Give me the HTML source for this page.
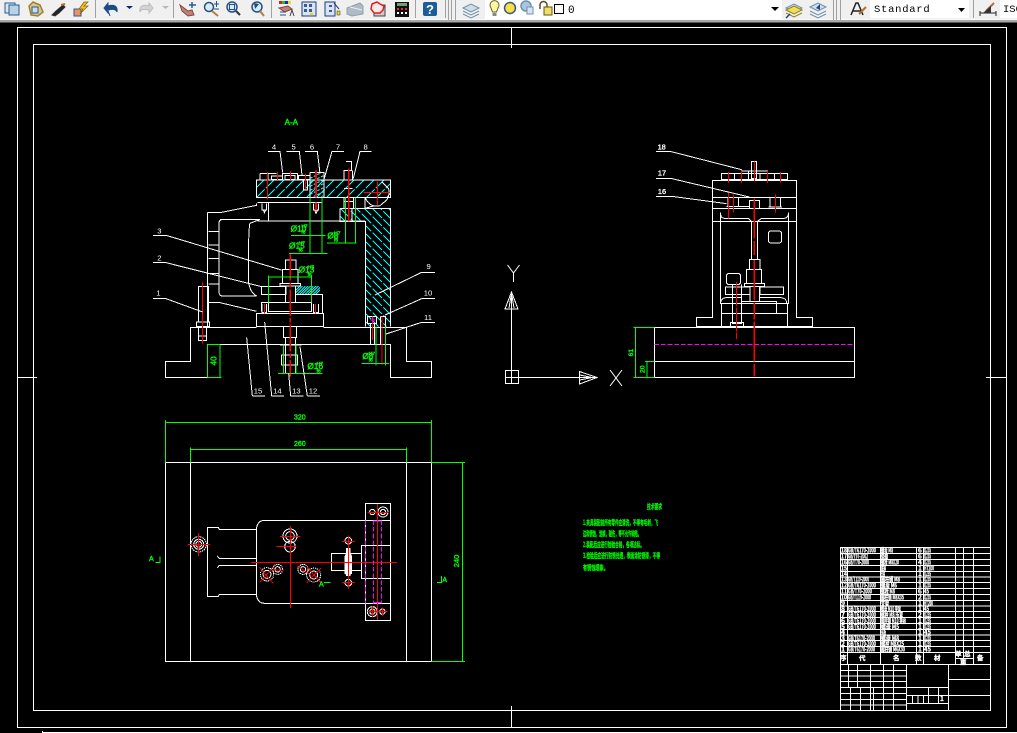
<!DOCTYPE html>
<html><head><meta charset="utf-8"><style>
html,body{margin:0;padding:0;background:#000;width:1017px;height:733px;overflow:hidden}
svg{display:block;position:absolute;left:0;top:0}
text{font-family:"Liberation Sans","Noto Sans CJK SC",sans-serif}
.n text{font-family:"Noto Sans CJK SC",sans-serif;font-weight:700;font-size:7px;fill:#00f000;stroke:#00f000;stroke-width:.35}
.t text{font-family:"Noto Sans CJK SC",sans-serif;font-weight:700;font-size:6.500px;fill:#fff;stroke:#fff;stroke-width:.3}
.g text{stroke:#0f0;stroke-width:1.200}
</style></head><body>
<svg width="1017" height="733" viewBox="0 0 1017 733" xmlns="http://www.w3.org/2000/svg">
<defs>
<clipPath id="c1"><rect x="350" y="210" width="402" height="52"/></clipPath>
<clipPath id="c2"><path d="M600 295H752V650H676V335H600Z"/></clipPath>
<clipPath id="c3"><rect x="465" y="528" width="75" height="25"/></clipPath>
<clipPath id="c4"><rect x="510" y="190" width="40" height="70"/></clipPath>
</defs>
<rect width="1017" height="733" fill="#000"/>
<!-- toolbar -->
<rect width="1017" height="20" fill="#f0f0f0"/>
<rect y="19" width="1017" height="1" fill="#fafafa"/>
<rect y="20" width="1017" height="2" fill="#a8a8a8"/>
<rect y="22" width="1017" height="1" fill="#555"/>
<rect x="485" width="297" height="19" fill="#fff"/>
<rect x="870" width="99" height="18" fill="#fff"/>
<rect x="1000" width="17" height="18" fill="#fff"/>
<g fill="#a0a0a0">
<rect x="95" width="1" height="18"/><rect x="173" width="1" height="18"/><rect x="271" width="1" height="18"/><rect x="415" width="1" height="18"/><rect x="445" width="1" height="18"/>
<rect x="448" width="1" height="20"/><rect x="451" width="1" height="20"/><rect x="455" width="1" height="20"/>
<rect x="833" width="1" height="20"/><rect x="836" width="1" height="20"/><rect x="840" width="1" height="20"/><rect x="973" width="1" height="18"/>
</g>
<!-- icons -->
<g stroke-width="1">
<rect x="5" y="3" width="10" height="10" fill="#d8e8f0" stroke="#2a5a90"/><rect x="9" y="5" width="10" height="10" fill="#b8d4e4" stroke="#2a5a90"/>
<path d="M29 6L33 2L40 5L43 12L38 16L31 15Z" fill="#d8c890" stroke="#a08030" stroke-width="1.500"/><rect x="32" y="7" width="6" height="6" fill="#c8dcea" stroke="#2a5a90"/>
<path d="M52 15L56 11L63 5L65 7L59 13L55 16Z" fill="#222" stroke="#333"/><path d="M61 5L65 4" stroke="#b07030" stroke-width="2"/>
<rect x="74" y="9" width="7" height="7" fill="#f09060" stroke="#2a5a90"/><path d="M84 2L79 9H83L80 14L88 6H84L88 2Z" fill="#f0c020" stroke="#806010" stroke-width=".7"/>
<path d="M104 8L108 3V6C114 4 118 6 117 12C116 9 113 9 108 10V13Z M107 8L110 16" fill="#1c4c88" stroke="#1c4c88"/>
<path d="M126 6h7l-3.500 3z" fill="#14246a"/>
<path d="M153 8L149 3V6C143 4 139 6 140 12C141 9 144 9 149 10V13Z" fill="#d4d4d4" stroke="#bbb"/>
<path d="M162 6h7l-3.500 3z" fill="#b8b8b8"/>
<path d="M180 5L188 11L192 10L194 15L188 16L182 11Z" fill="#c08078" stroke="#804840"/><path d="M192 2V8M189 5H196" stroke="#2a5a90" stroke-width="1.500"/>
<circle cx="209" cy="7" r="4.500" fill="#d8ecf8" stroke="#2a5080" stroke-width="1.500"/><path d="M212 11L218 16" stroke="#b08040" stroke-width="2"/><path d="M214 4h5M216.500 1v6M214 9h5" stroke="#2a5080"/>
<circle cx="232" cy="7" r="5" fill="#d8ecf8" stroke="#2a5080" stroke-width="1.500"/><rect x="229.500" y="4.500" width="5" height="5" fill="none" stroke="#2a5080"/><path d="M236 11L240 15" stroke="#333" stroke-width="2"/>
<circle cx="257" cy="7" r="5" fill="#d8ecf8" stroke="#2a5080" stroke-width="1.500"/><path d="M255 9L254 3L259 4Z" fill="#1c4c88"/><path d="M260 11L264 16" stroke="#b08040" stroke-width="2"/>
<rect x="279" y="1" width="3" height="3" fill="#e02020"/><rect x="282" y="1" width="3" height="3" fill="#20c020"/><rect x="285" y="1" width="3" height="3" fill="#2020e0"/><rect x="288" y="1" width="3" height="3" fill="#e0e020"/><path d="M279 8L288 6L292 9L285 12Z" fill="#c08078" stroke="#804840"/><path d="M280 12h6M280 15h6" stroke="#2a5080"/><path d="M290 16L292 10L294 16" stroke="#444" fill="none"/>
<rect x="302" y="2" width="14" height="14" fill="#d8e4f0" stroke="#1c3c80"/><path d="M304 4h3v3h-3zM309 4h3v3h-3zM304 9h3v3h-3zM309 9h3v3h-3z" fill="#3a5a90"/><rect x="310" y="13" width="3" height="2" fill="#f0d020"/>
<rect x="325" y="2" width="10" height="14" fill="#d8e4f0" stroke="#1c3c80"/><path d="M329 5h3v2h-3zM329 10h3v2h-3z" fill="#3a5a90"/><path d="M334 3L339 9" stroke="#1c3c80" fill="none"/><rect x="337" y="11" width="3" height="4" fill="#f0d020" stroke="#333" stroke-width=".5"/>
<path d="M347 8L360 3L363 6V14L352 16L347 14Z" fill="#b0bcc4" stroke="#90a0ac"/><path d="M350 7L362 10" stroke="#eee"/>
<rect x="374" y="5" width="11" height="11" fill="#ccc" stroke="#444"/><path d="M372 4L377 2L380 4L384 6L383 10L380 13L374 13L371 9Z" fill="#fde8e8" stroke="#d82020" stroke-width="1.500"/>
<rect x="395" y="2" width="14" height="15" fill="#111"/><rect x="397" y="3" width="10" height="3" fill="#70a070"/><path d="M397 8h2v2h-2zM401 8h2v2h-2zM405 8h2v2h-2z" fill="#e03030"/><path d="M397 12h2v2h-2zM401 12h2v2h-2zM405 12h2v2h-2z" fill="#fff"/>
<rect x="423" y="2" width="14" height="14" rx="2" fill="#1c5c98"/><text x="430" y="14" font-size="13" font-weight="700" fill="#fff" text-anchor="middle">?</text>
<path d="M463 8L471 4L479 8L471 12Z" fill="#d0dce8" stroke="#7090a8"/><path d="M463 11L471 15L479 11M463 14L471 18L479 14" fill="none" stroke="#7090a8"/>
<path d="M491 8a4.500 4.500 0 1 1 7 0L496.500 12H492.500Z" fill="#fff8a0" stroke="#606030"/><rect x="492.500" y="13" width="4" height="3" fill="#888"/>
<circle cx="510" cy="8" r="5.500" fill="#f8e040" stroke="#305880" stroke-width="1.500"/>
<circle cx="526" cy="6" r="5" fill="#a8c8e0" stroke="#7090b0" stroke-width="1.500"/><rect x="527" y="7" width="6" height="7" fill="#d8e4f0" stroke="#7090b0"/>
<path d="M540 9V5a3.500 3.500 0 0 1 7 0V7" fill="none" stroke="#604820" stroke-width="1.500"/><rect x="544" y="7" width="8" height="8" fill="#f0e060" stroke="#605020"/>
<rect x="554.500" y="4.500" width="9" height="9" fill="#fff" stroke="#000"/>
<path d="M771 7h8l-4 4z" fill="#000"/>
<path d="M786 8L794 4L802 8L794 12Z" fill="#d0dce8" stroke="#7090a8"/><path d="M786 10L794 14L802 10L794 6Z" fill="#f0e050" stroke="#908020"/><path d="M786 13L794 17L802 13" fill="none" stroke="#908020"/><path d="M786 18L790 14" stroke="#1c4c88" stroke-width="1.500"/>
<path d="M810 7L818 3L826 7L818 11Z" fill="#d0dce8" stroke="#7090a8"/><path d="M810 11L818 15L826 11M810 14L818 18L826 14" fill="none" stroke="#7090a8"/><path d="M816 8L820 4V10Z" fill="#1c4c88"/>
<path d="M851 15L856 3H858L863 15M853 11H861" fill="none" stroke="#222" stroke-width="1.500"/><path d="M859 14L866 7" stroke="#b07030" stroke-width="2"/>
<path d="M980 13H996M980 11V16M996 11V16" stroke="#222" fill="none"/><path d="M986 11L994 3" stroke="#b07040" stroke-width="2"/><path d="M983 13L991 6V13Z" fill="#333"/>
</g>
<text x="568" y="13" font-size="11" fill="#000" style="font-family:'Liberation Mono',monospace">0</text>
<text x="874" y="12" font-size="10.500" fill="#000" letter-spacing=".75" style="font-family:'Liberation Mono',monospace">Standard</text>
<path d="M958 8h7l-3.500 4z" fill="#000"/>
<text x="1003" y="12" font-size="10.500" fill="#000" style="font-family:'Liberation Mono',monospace">ISO</text>

<!-- frames -->
<g fill="none" stroke="#fff" stroke-width="1" shape-rendering="crispEdges">
<rect x="17.500" y="27.500" width="989" height="700"/>
<rect x="33.500" y="44.500" width="957" height="666"/>
<path d="M511.500 27V48M511.500 706V727M17 377.500H37M986 377.500H1006"/>
<path d="M42 732.500H1017M42.500 731V733"/>
<!-- UCS -->
<path d="M511.500 309V370M505.500 370.500h13v13h-13zM505.500 377.500H518.500M511.500 370.500V383.500M518.500 377.500H580"/>
<path d="M505 309L511.500 292L518 309ZM511.500 292V309M509 308L511 296M514 308L512 296" stroke-width="1"/>
<path d="M579.500 371.500V384L597 377.500ZM580 377.500H597M580 375L592 377.500M580 380L592 377.500"/>
<path d="M507.500 265L513.500 273L519.500 265M513.500 273V282" shape-rendering="auto"/>
<path d="M610 370L622 386M622 370L610 386" shape-rendering="auto"/>
</g>

<!-- SECTION VIEW -->
<g transform="translate(140,110) scale(.33333)" fill="none" stroke-width="3" shape-rendering="crispEdges">
<path clip-path="url(#c1)" stroke="#0ff" stroke-dasharray="34 5" d="M320 262l52-52m-22 52l52-52m-22 52l52-52m-22 52l52-52m-22 52l52-52m-22 52l52-52m-22 52l52-52m-22 52l52-52m-22 52l52-52m-22 52l52-52m-22 52l52-52m-22 52l52-52m-22 52l52-52m-22 52l52-52m-22 52l52-52"/>
<path clip-path="url(#c2)" stroke="#0ff" stroke-dasharray="40 6" d="M600 150l160 160m-160-136l160 160m-160-136l160 160m-160-136l160 160m-160-136l160 160m-160-136l160 160m-160-136l160 160m-160-136l160 160m-160-136l160 160m-160-136l160 160m-160-136l160 160m-160-136l160 160m-160-136l160 160m-160-136l160 160m-160-136l160 160m-160-136l160 160m-160-136l160 160m-160-136l160 160"/>
<path clip-path="url(#c3)" stroke="#0ff" d="M455 553l25-25m-17 25l25-25m-17 25l25-25m-17 25l25-25m-17 25l25-25m-17 25l25-25m-17 25l25-25m-17 25l25-25m-17 25l25-25m-17 25l25-25"/>
<path clip-path="url(#c4)" stroke="#0ff" stroke-dasharray="7 5" d="M500 210l60-30m-60 42l60-30m-60 42l60-30m-60 42l60-30m-60 42l60-30m-60 42l60-30m-60 42l60-30"/>
<g stroke="#fff">
<path d="M202 802H76V754H152V652H350M550 652H800V754H875V802H752V703H202V802"/>
<rect x="350" y="610" width="200" height="40"/>
<path d="M350 210H752V262H350ZM352 278H545M352 333H675M385 278V333M675 262V295L700 288M600 295H752V650M600 295V335H676V650M510 188H552V262M510 188V262"/>
<path d="M675 262Q690 295 720 287L740 270Q752 250 745 235L725 215"/>
<path d="M202 308H240L350 286V280M202 308V652M240 328H360L330 340Q325 350 325 500Q325 545 350 558H245Q237 555 237 545V340Q237 328 250 328M205 365H238M205 405H238M205 445H238M205 490H238M205 522H238M205 578H240L350 604"/>
<path d="M360 190H410M360 190V210M384 190V210M394 198H428V208H394ZM428 190H472V210H428ZM435 196H465V208H435ZM476 196H510V208H476ZM490 210V240H502V210"/>
<path d="M618 155H634V182H612V210H638V182M612 235H638M612 262H640V295H612ZM612 275H640M616 295V335M636 295V335"/>
<path d="M366 280V300H380V280M370 300L373 308L377 300M520 280V300H536V280M524 300L528 310L533 300"/>
<path d="M436 450H468V478H436ZM428 478H474V520H428ZM420 520H482V528H420ZM365 530H438V553H365ZM386 553V578H437M466 553H548V610M386 578H515V605H386ZM437 528V578M466 528V578M365 605V578H386"/>
<path d="M366 582V608H380V582M520 582V608H536V582"/>
<path d="M175 530H205V636H175ZM170 636H208V650H170ZM176 650V692H200V650M176 678H200"/>
<path d="M430 650H470V682H430ZM436 682H466V790H436ZM420 705H484M424 735H472V765H424ZM436 770V790"/>
<path d="M682 620H710V640H682ZM692 640V702M704 640V702M722 620H736V680M722 620V702M736 680V702"/>
</g>
<g stroke="#f00">
<path d="M382 186V268M412 186V210M451 183V210M497 190V238"/>
<path d="M528 182V262M528 278V300" stroke-width="5"/>
<path d="M626 176V335" stroke-width="4"/>
<path d="M670 248H750M712 215V285"/>
<path d="M451 432V800" stroke-width="4" stroke-dasharray="80 6 14 6"/>
<path d="M187 518V700M373 582V610M527 582V610" stroke-width="3"/>
<path d="M698 620V690M726 620V765" stroke-width="3"/>
</g>
<path d="M692 630H706M699 622V638" stroke="#f0f" stroke-width="4"/>
<g stroke="#0f0">
<path d="M510 262V432M546 262V432M453 376H557M447 430H563"/>
<path d="M616 262V400M646 262V400M561 399H650"/>
<path d="M386 496V578M514 496V578M386 501H514"/>
<path d="M202 703V802M240 703V802M202 703H240M202 802H245"/>
<path d="M430 703V790M468 703V790M414 790H548"/>
<path d="M708 650V766M736 650V766M665 760H747"/>
</g>
<g stroke="#fff">
<path d="M384 124H420L428 188M440 124H478L486 195M495 124H532L540 190M612 124L576 124L553 205M695 124H660L640 205"/>
<path d="M39 376H78L424 480M39 458H78L365 530M39 566H78L188 606M885 487H845L705 555M885 566H845L735 615M885 637H845L738 672"/>
<path d="M337 858H375M337 858L320 682M395 858H432M395 858L374 636M452 858H490M452 858L446 790M502 858H540M502 858L480 710"/>
</g>
<g fill="#fff" font-size="23" stroke="none" text-anchor="middle">
<text x="402" y="118">4</text><text x="461" y="118">5</text><text x="516" y="118">6</text><text x="594" y="118">7</text><text x="677" y="118">8</text>
<text x="58" y="371">3</text><text x="58" y="452">2</text><text x="55" y="556">1</text><text x="866" y="477">9</text><text x="864" y="557">10</text><text x="864" y="630">11</text>
<text x="354" y="851">15</text><text x="412" y="851">14</text><text x="469" y="851">13</text><text x="519" y="851">12</text>
</g>
<g class="g" fill="#0f0" font-size="25">
<text x="434" y="45" font-size="24">A-A</text>
<text x="452" y="365">Ø10</text><text x="484" y="352" font-size="15">H7</text><text x="484" y="371" font-size="15">f6</text>
<text x="447" y="416">Ø15</text><text x="476" y="403" font-size="15">H7</text><text x="476" y="425" font-size="15">f6</text>
<text x="562" y="385">Ø8</text><text x="582" y="374" font-size="15">H7</text><text x="582" y="394" font-size="15">f6</text>
<text x="476" y="488">Ø13</text><text x="503" y="476" font-size="15">H7</text><text x="503" y="498" font-size="15">f6</text>
<text x="502" y="777">Ø16</text><text x="530" y="765" font-size="15">H7</text><text x="530" y="787" font-size="15">f6</text>
<text x="667" y="747">Ø8</text><text x="686" y="735" font-size="15">H7</text><text x="686" y="755" font-size="15">f6</text>
<text transform="translate(229,766) rotate(-90)" font-size="24">40</text>
</g>
</g>

<!-- SIDE VIEW -->
<g transform="translate(630,135) scale(.33333)" fill="none" stroke-width="3" shape-rendering="crispEdges">
<g stroke="#fff">
<rect x="73" y="577" width="601" height="150"/><path d="M73 679H674"/>
<path d="M199 575V547H247V136H499V547H548V575ZM247 187H499M247 220H499M247 259H499M271 232V505H476V232"/>
<path d="M274 116H473V134H274ZM313 116V134M356 108V134M390 116V134M433 116V134M334 108H412V116H334ZM364 80H380V130H364Z"/>
<path d="M272 232Q270 250 285 250H355L364 259V375M475 232Q477 250 460 250H395L382 259V375"/>
<path d="M294 188V215H326V188M290 215H332M420 188V216H452V188M415 216H456M358 196H388V220H358ZM330 215H358"/>
<rect x="415" y="288" width="40" height="36" rx="8"/>
<rect x="289" y="415" width="43" height="34" rx="8"/>
<path d="M358 374H390V403H358ZM349 403H395V445H349ZM343 445H404V455H343ZM286 456H360V478H286ZM390 456H460V478H390ZM360 455V500H388V455"/>
<path d="M272 505Q272 488 290 488H335M470 505Q470 488 450 488H390M274 505V575H473V505M335 500H440V535H335ZM274 535H472"/>
<path d="M308 449V565H334V449M301 562H341V575H301Z"/>
</g>
<g stroke="#f00">
<path d="M295 111V144M334 108V144M373 80V140M412 108V144M451 111V144" stroke-width="3"/>
<path d="M295 173V250M310 178V232M436 178V232" stroke-width="3"/>
<path d="M373 190V360M373 375V725" stroke-width="4" stroke-dasharray="120 8 50 6"/>
<path d="M320 441V612" stroke-width="3" stroke-dasharray="72 4"/>
</g>
<path d="M73 628H674" stroke="#f0f" stroke-dasharray="14 6"/>
<g stroke="#fff">
<path d="M78 49H120L335 104M78 130H122L358 186M78 184H125L290 206"/>
</g>
<g stroke="#0f0">
<path d="M10 577H73M16 577V727M10 727H73M45 679H73M51 679V727"/>
</g>
<g fill="#fff" stroke="#fff" stroke-width="1" font-size="22" text-anchor="middle"><text x="95" y="44">18</text><text x="96" y="122">17</text><text x="96" y="177">16</text></g>
<g class="g" fill="#0f0" font-size="20"><text transform="translate(9,664) rotate(-90)">61</text><text transform="translate(44,714) rotate(-90)">20</text></g>
</g>

<!-- TOP VIEW -->
<g transform="translate(140,410) scale(.33333)" fill="none" stroke-width="3" shape-rendering="crispEdges">
<g stroke="#fff">
<rect x="76" y="157" width="799" height="597"/>
<path d="M151 157V754M799 157V754"/>
<path d="M202 352V559H235L238 553H349V358H238L235 352ZM349 358Q352 331 374 331H752M349 553Q352 580 374 580H752M232 438L238 445H349M232 473L238 466H349"/>
<path d="M676 280H752V632H676ZM676 331H752M676 580H752M664 406H752V506H664ZM664 430H574V482H664M664 406V506"/>
<circle cx="176" cy="403" r="23" stroke-dasharray="5 2"/><circle cx="176" cy="403" r="15"/><circle cx="176" cy="403" r="9"/>
<circle cx="450" cy="378" r="21"/><circle cx="450" cy="378" r="13"/><circle cx="450" cy="410" r="16"/>
<circle cx="381" cy="493" r="20" stroke-dasharray="4 2"/><circle cx="381" cy="493" r="12"/><circle cx="413" cy="478" r="15" stroke-dasharray="4 2"/><circle cx="413" cy="478" r="8"/>
<circle cx="521" cy="495" r="21" stroke-dasharray="4 2"/><circle cx="521" cy="495" r="12"/><circle cx="489" cy="478" r="15" stroke-dasharray="4 2"/><circle cx="489" cy="478" r="8"/>
<circle cx="729" cy="306" r="15"/><circle cx="729" cy="306" r="8"/><circle cx="697" cy="605" r="15"/><circle cx="697" cy="605" r="8"/>
<circle cx="697" cy="306" r="8"/><circle cx="727" cy="605" r="8"/>
<circle cx="625" cy="392" r="10"/><circle cx="625" cy="518" r="10"/>
<path d="M625 418L615 440V490L625 495L635 490V440Z" fill="#fff"/>
<rect x="620" y="415" width="10" height="82" fill="#fff"/>
</g>
<g stroke="#f00">
<path d="M142 403H210M176 369V438"/>
<path d="M333 457H771M451 348V594" />
<path d="M420 379H482M410 410H470M358 472L400 520M360 516L400 470M395 480H432M472 468L512 495M500 470L543 518M500 518L543 474"/>
<path d="M625 376V537M606 394H645M606 518H645M606 457H640"/>
<path d="M712 282V630M682 307H745M713 290V322M682 605H742M697 588V622M727 592V618"/>
</g>
<g stroke="#f0f" stroke-dasharray="14 6">
<path d="M676 331V580M700 331V580M725 331V580"/>
</g>
<path d="M700 333H725M700 578H725" stroke="#f0f"/>
<g stroke="#0f0">
<path d="M76 30V157M875 30V157M76 38H875M151 112V157M799 112V157M151 119H799M875 157H975M875 754H975M967 157V754"/>
<path d="M46 458H60V440M891 518H905V498M552 518H572"/>
</g>
<g class="g" fill="#0f0" font-size="21">
<text x="462" y="28">320</text><text x="462" y="108">260</text>
<text transform="translate(957,472) rotate(-90)" font-size="23">240</text>
<text x="27" y="453">A</text><text x="907" y="516">A</text><text x="537" y="530">A</text>
</g>
</g>

<!-- Notes -->
<g class="n">
<text x="647" y="509" textLength="15" lengthAdjust="spacingAndGlyphs">技术要求</text>
<text x="583" y="525" textLength="75" lengthAdjust="spacingAndGlyphs">1.夹具装配前所有零件应清洗，不得有毛刺，飞</text>
<text x="583" y="536" textLength="58" lengthAdjust="spacingAndGlyphs">边和锈蚀，划痕，碰伤，等不允许缺陷。</text>
<text x="583" y="547" textLength="61" lengthAdjust="spacingAndGlyphs">2.装配后应进行检验合格，各项达标。</text>
<text x="583" y="558" textLength="77" lengthAdjust="spacingAndGlyphs">3.检验后应进行防锈处理，表面涂防锈漆，不得</text>
<text x="583" y="570" textLength="25" lengthAdjust="spacingAndGlyphs">有锈蚀现象。</text>
</g>

<!-- Title block -->
<g transform="translate(830,540) scale(.33333)" fill="none" stroke-width="3" shape-rendering="crispEdges">
<g stroke="#fff">
<path d="M31 510V22H481V510M31 22H481"/>
<path d="M31 40H481M31 58H481M31 76H481M31 94H481M31 111H481M31 128H481M31 146H481M31 163H481M31 181H481M31 198H481M31 215H481M31 233H481M31 250H481M31 268H481M31 285H481M31 302H481M31 320H481M31 337H481M31 373H481"/>
<path d="M53 22V373M151 22V373M260 22V373M281 22V373M377 22V337M401 22V355M431 22V373M377 337V373M377 355H431"/>
<path d="M31 391H230M31 408H230M31 425H230M31 442H230M31 460H230M31 478H230M31 495H230M55 373V442M82 373V442M121 373V510M160 373V510M191 373V510M62 442V510M92 442V510M131 442V510"/>
<path d="M230 373V510M356 373V510M356 418H481M356 466H481M230 442H356M230 466H356M230 490H356M295 442V490M325 442V490M247 466V490M264 466V490M281 466V490"/>
</g>
</g>
<g class="t">
<text x="841" y="552.500" textLength="6" lengthAdjust="spacingAndGlyphs">18</text><text x="848" y="552.500" textLength="28" lengthAdjust="spacingAndGlyphs">GB/T6170-2000</text><text x="881" y="552.500" textLength="12" lengthAdjust="spacingAndGlyphs">螺母 M8</text><text x="918" y="552.500">6</text><text x="924" y="552.500" textLength="7" lengthAdjust="spacingAndGlyphs">Q235</text>
<text x="841" y="558.500" textLength="6" lengthAdjust="spacingAndGlyphs">17</text><text x="848" y="558.500" textLength="20" lengthAdjust="spacingAndGlyphs">GB/T97-2002</text><text x="881" y="558.500" textLength="7" lengthAdjust="spacingAndGlyphs">垫圈</text><text x="918" y="558.500">6</text><text x="924" y="558.500" textLength="7" lengthAdjust="spacingAndGlyphs">Q235</text>
<text x="841" y="564.500" textLength="6" lengthAdjust="spacingAndGlyphs">16</text><text x="848" y="564.500" textLength="21" lengthAdjust="spacingAndGlyphs">GB/T70-2000</text><text x="881" y="564.500" textLength="18" lengthAdjust="spacingAndGlyphs">螺栓 M8X20</text><text x="918" y="564.500">4</text><text x="924" y="564.500" textLength="7" lengthAdjust="spacingAndGlyphs">Q235</text>
<text x="841" y="570.500" textLength="6" lengthAdjust="spacingAndGlyphs">15</text><text x="881" y="570.500" textLength="5" lengthAdjust="spacingAndGlyphs">底座</text><text x="918" y="570.500">1</text><text x="924" y="570.500" textLength="10" lengthAdjust="spacingAndGlyphs">HT200</text>
<text x="841" y="576" textLength="6" lengthAdjust="spacingAndGlyphs">14</text><text x="881" y="576" textLength="4" lengthAdjust="spacingAndGlyphs">支架</text><text x="918" y="576">1</text><text x="924" y="576" textLength="7" lengthAdjust="spacingAndGlyphs">Q235</text>
<text x="841" y="581.500" textLength="6" lengthAdjust="spacingAndGlyphs">13</text><text x="848" y="581.500" textLength="21" lengthAdjust="spacingAndGlyphs">GB/T119-2000</text><text x="881" y="581.500" textLength="19" lengthAdjust="spacingAndGlyphs">圆柱销 M8</text><text x="918" y="581.500">1</text><text x="924" y="581.500" textLength="7" lengthAdjust="spacingAndGlyphs">Q235</text>
<text x="841" y="587.500" textLength="6" lengthAdjust="spacingAndGlyphs">12</text><text x="848" y="587.500" textLength="28" lengthAdjust="spacingAndGlyphs">GB/T6170-2000</text><text x="881" y="587.500" textLength="16" lengthAdjust="spacingAndGlyphs">螺母 M6</text><text x="918" y="587.500">1</text><text x="924" y="587.500" textLength="7" lengthAdjust="spacingAndGlyphs">Q235</text>
<text x="841" y="593.500" textLength="6" lengthAdjust="spacingAndGlyphs">11</text><text x="848" y="593.500" textLength="24" lengthAdjust="spacingAndGlyphs">GB/T70-2000</text><text x="881" y="593.500" textLength="14" lengthAdjust="spacingAndGlyphs">螺栓 M8</text><text x="918" y="593.500">6</text><text x="924" y="593.500" textLength="5" lengthAdjust="spacingAndGlyphs">45</text>
<text x="841" y="599.500" textLength="6" lengthAdjust="spacingAndGlyphs">10</text><text x="848" y="599.500" textLength="23" lengthAdjust="spacingAndGlyphs">GB/T119-2000</text><text x="881" y="599.500" textLength="23" lengthAdjust="spacingAndGlyphs">圆柱销 M8X35</text><text x="918" y="599.500">2</text><text x="924" y="599.500" textLength="7" lengthAdjust="spacingAndGlyphs">Q235</text>
<text x="841" y="605.500" textLength="4" lengthAdjust="spacingAndGlyphs">9</text><text x="881" y="605.500" textLength="8" lengthAdjust="spacingAndGlyphs">支架</text><text x="918" y="605.500">1</text><text x="924" y="605.500" textLength="9" lengthAdjust="spacingAndGlyphs">HT200</text>
<text x="841" y="611" textLength="4" lengthAdjust="spacingAndGlyphs">8</text><text x="848" y="611" textLength="28" lengthAdjust="spacingAndGlyphs">GB/T6170-2000</text><text x="881" y="611" textLength="20" lengthAdjust="spacingAndGlyphs">螺母 M10 夹紧</text><text x="918" y="611">1</text><text x="924" y="611" textLength="5" lengthAdjust="spacingAndGlyphs">45</text>
<text x="841" y="617" textLength="4" lengthAdjust="spacingAndGlyphs">7</text><text x="848" y="617" textLength="28" lengthAdjust="spacingAndGlyphs">GB/T6170-2000</text><text x="881" y="617" textLength="22" lengthAdjust="spacingAndGlyphs">螺栓 M8 压紧</text><text x="918" y="617">2</text><text x="924" y="617" textLength="7" lengthAdjust="spacingAndGlyphs">Q235</text>
<text x="841" y="623" textLength="4" lengthAdjust="spacingAndGlyphs">6</text><text x="848" y="623" textLength="28" lengthAdjust="spacingAndGlyphs">GB/T6170-2000</text><text x="881" y="623" textLength="25" lengthAdjust="spacingAndGlyphs">圆柱销 M10 导向</text><text x="918" y="623">1</text><text x="924" y="623" textLength="7" lengthAdjust="spacingAndGlyphs">Q235</text>
<text x="841" y="629" textLength="4" lengthAdjust="spacingAndGlyphs">5</text><text x="848" y="629" textLength="28" lengthAdjust="spacingAndGlyphs">GB/T6170-2000</text><text x="881" y="629" textLength="18" lengthAdjust="spacingAndGlyphs">螺母 M5</text><text x="918" y="629">1</text><text x="924" y="629" textLength="7" lengthAdjust="spacingAndGlyphs">Q235</text>
<text x="841" y="634.500" textLength="4" lengthAdjust="spacingAndGlyphs">4</text><text x="881" y="634.500" textLength="5" lengthAdjust="spacingAndGlyphs">压板</text><text x="918" y="634.500">1</text><text x="924" y="634.500" textLength="7" lengthAdjust="spacingAndGlyphs">45</text>
<text x="841" y="640.500" textLength="4" lengthAdjust="spacingAndGlyphs">3</text><text x="848" y="640.500" textLength="27" lengthAdjust="spacingAndGlyphs">GB/T6170-2000</text><text x="881" y="640.500" textLength="18" lengthAdjust="spacingAndGlyphs">螺母 M8</text><text x="918" y="640.500">1</text><text x="924" y="640.500" textLength="7" lengthAdjust="spacingAndGlyphs">Q235</text>
<text x="841" y="646" textLength="4" lengthAdjust="spacingAndGlyphs">2</text><text x="848" y="646" textLength="28" lengthAdjust="spacingAndGlyphs">GB/T6170-2000</text><text x="881" y="646" textLength="23" lengthAdjust="spacingAndGlyphs">螺栓 M8X25</text><text x="918" y="646">1</text><text x="924" y="646" textLength="7" lengthAdjust="spacingAndGlyphs">Q235</text>
<text x="841" y="651.500" textLength="4" lengthAdjust="spacingAndGlyphs">1</text><text x="848" y="651.500" textLength="27" lengthAdjust="spacingAndGlyphs">GB/T6170-2000</text><text x="881" y="651.500" textLength="24" lengthAdjust="spacingAndGlyphs">圆柱销 M6X30</text><text x="918" y="651.500">1</text><text x="924" y="651.500" textLength="7" lengthAdjust="spacingAndGlyphs">45</text>
<text x="840" y="660">序</text><text x="859" y="660">代</text><text x="893" y="660">名</text><text x="915" y="660">数</text><text x="934" y="660">材</text><text x="955" y="656">单</text><text x="964" y="656">总</text><text x="960" y="664">重</text><text x="977" y="660">备</text>
<text x="940" y="701">1</text>
</g>
</svg>
</body></html>
